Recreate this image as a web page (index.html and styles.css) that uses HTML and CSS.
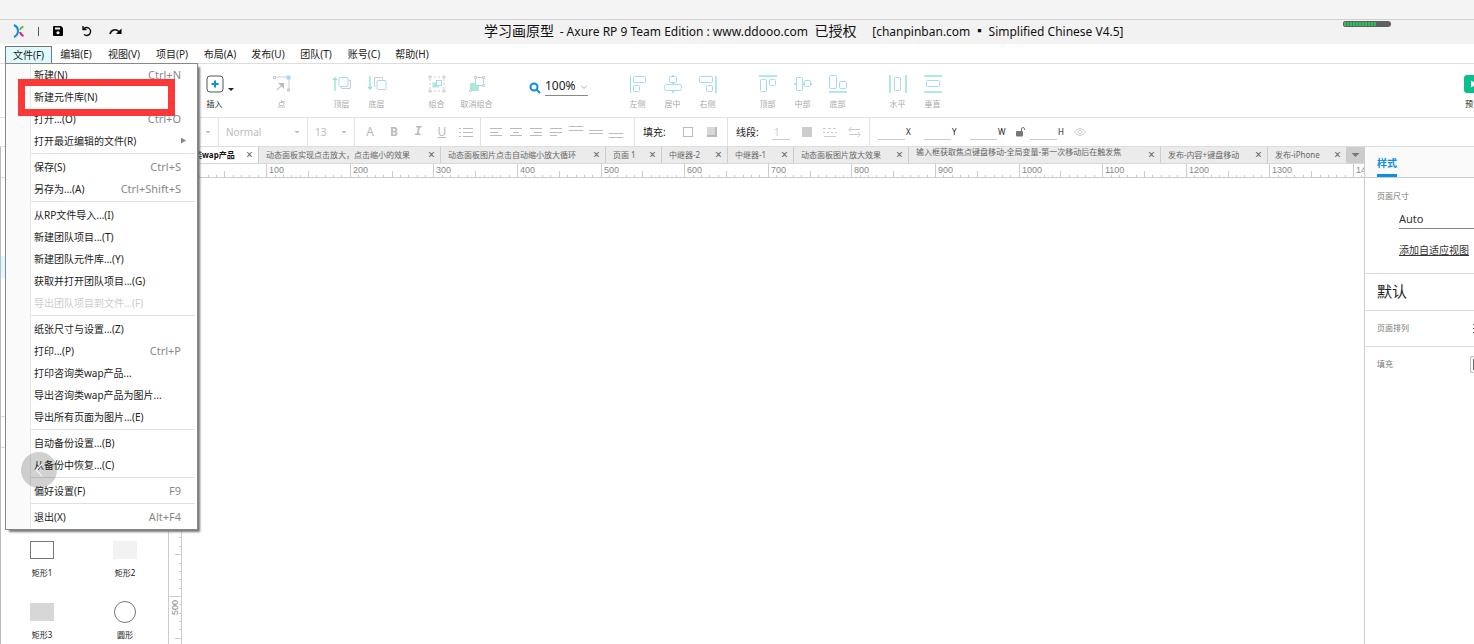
FILE: index.html
```html
<!DOCTYPE html>
<html lang="zh-CN">
<head>
<meta charset="utf-8">
<title>学习画原型 - Axure RP 9</title>
<link rel="stylesheet" href="styles.css">
</head>
<body>
<div class="top-strip"></div>
<header class="titlebar">
  <div class="quick">
    <svg class="logo" width="12" height="14" viewBox="0 0 12 14" fill="none" stroke-width="2"><path d="M1 1C3 2 5 4.500 5 7S3 12 1 13" stroke="#0c8ee2"/><path d="M10.500 2.500C9 3 7.500 4.500 7 6" stroke="#74b943"/><path d="M7 8C7.500 10 9 11.500 10.500 12" stroke="#e5127d"/></svg>
    <span class="quick-sep"></span>
    <button aria-label="保存"><svg width="10" height="10" viewBox="0 0 10 10"><path fill-rule="evenodd" d="M1 0h7l2 2v7a1 1 0 0 1-1 1H1a1 1 0 0 1-1-1V1a1 1 0 0 1 1-1zM2 1.500v2h5v-2zM5 5.200a1.600 1.600 0 1 0 .01 0z"/></svg></button>
    <button aria-label="撤销"><svg width="12" height="12" viewBox="0 0 12 12" fill="none" stroke="#111" stroke-width="1.400"><path d="M2 1v3.500h3.500M2.300 4.200A4 4 0 1 1 3 9.500"/></svg></button>
    <button aria-label="重做"><svg width="13" height="10" viewBox="0 0 13 10"><path d="M1 8C2 3.500 7 2.500 10 5.500" fill="none" stroke="#111" stroke-width="1.600"/><path d="M12.500 2.500v5.500H7z"/></svg></button>
  </div>
  <h1 class="title">学习画原型 <span class="title-app">- Axure RP 9 Team Edition : www.ddooo.com</span> 已授权 <span class="title-tail">[chanpinban.com ▪ Simplified Chinese V4.5]</span></h1>
</header>
<div class="progress"><i></i></div>

<nav class="menubar">
  <button class="open">文件(F)</button><button>编辑(E)</button><button>视图(V)</button><button>项目(P)</button><button>布局(A)</button><button>发布(U)</button><button>团队(T)</button><button>账号(C)</button><button>帮助(H)</button>
</nav>

<div class="ribbon">
  <button class="tool on"><svg width="18" height="18" viewBox="0 0 18 18" fill="none"><rect x="1" y="1" width="16" height="16" rx="3" stroke="#555"/><path d="M9 5.500v7M5.500 9h7" stroke="#0d8ee2" stroke-width="2"/></svg>插入</button>
  <i class="caret dark"></i>
  <button class="tool point"><svg width="18" height="18" viewBox="0 0 18 18" fill="none" stroke="#ccc"><path d="M3 2h11M16 4v10"/><rect x=".5" y="1.500" width="2" height="2"/><rect x="14.500" y="14" width="2" height="2"/><rect x="14" y="1" width="3" height="3" fill="#a8d8f8" stroke="#a8d8f8"/><path d="M4 15l4-4" stroke-width="1.500"/><path d="M11 8v6L5 8z" fill="#bbb" stroke="none"/></svg>点</button>
  <div class="group">
    <button class="tool"><svg width="20" height="18" viewBox="0 0 20 18" fill="none"><path d="M3 16V3M1 5l2-2 2 2" stroke="#95e5d0" stroke-width="1.400"/><path d="M16.500 5.500h2v8h-9v-2" stroke="#ccc"/><rect x="7" y="2.500" width="9" height="9" rx="1" stroke="#a8d8f8"/></svg>顶层</button>
    <button class="tool"><svg width="20" height="18" viewBox="0 0 20 18" fill="none"><path d="M3 1v13M1 12l2 2 2-2" stroke="#95e5d0" stroke-width="1.400"/><path d="M8.500 11.500h-1v-9h8v2" stroke="#ccc"/><rect x="10" y="5.500" width="9" height="9" rx="1" stroke="#a8d8f8"/></svg>底层</button>
  </div>
  <div class="group">
    <button class="tool"><svg width="18" height="18" viewBox="0 0 18 18" fill="none"><rect x="2" y="2" width="14" height="14" stroke="#ccc" stroke-dasharray="2 2"/><path d="M1 1h2v2H1zM15 1h2v2h-2zM1 15h2v2H1zM15 15h2v2h-2z" fill="#fff" stroke="#ccc"/><rect x="4.500" y="7.500" width="6" height="5" fill="#a9ead9"/><rect x="8.500" y="5.500" width="5" height="5" stroke="#a8d8f8" fill="#fff"/></svg>组合</button>
    <button class="tool wide"><svg width="18" height="18" viewBox="0 0 18 18" fill="none"><rect x="2" y="8" width="9" height="8" fill="#a9ead9"/><rect x="7.500" y="2.500" width="8" height="8" stroke="#a8d8f8" fill="#fff"/><path d="M6.500 1.500h2v2h-2zM14.500 1.500h2v2h-2zM14.500 9.500h2v2h-2zM1.500 14.500h2v2h-2z" fill="#fff" stroke="#ccc"/></svg>取消组合</button>
  </div>
  <div class="zoom">
    <svg width="12" height="12" viewBox="0 0 12 12" fill="none" stroke="#0d8ee2" stroke-width="2"><circle cx="5" cy="5" r="3.500"/><path d="M7.500 7.500L11 11"/></svg>
    <label class="zoom-box"><input value="100%" aria-label="缩放"><svg width="6" height="4" viewBox="0 0 6 4" fill="none" stroke="#aaa"><path d="M0 .5l3 3 3-3"/></svg></label>
  </div>
  <div class="group">
    <button class="tool"><svg width="18" height="18" viewBox="0 0 18 18" fill="none" stroke="#a8d8f8"><path d="M1.500 1v17" stroke="#95e5d0"/><rect x="4.500" y="1.500" width="12" height="6" rx="1"/><rect x="4.500" y="10.500" width="6" height="6" rx="1"/></svg>左侧</button>
    <button class="tool"><svg width="18" height="18" viewBox="0 0 18 18" fill="none" stroke="#a8d8f8"><path d="M9 0v2M9 7.500V10M9 15.500V18" stroke="#95e5d0" stroke-width="1.500"/><rect x="5.500" y="1.500" width="7" height="6" rx="1"/><rect x=".5" y="9.500" width="17" height="6" rx="2"/></svg>居中</button>
    <button class="tool"><svg width="18" height="18" viewBox="0 0 18 18" fill="none" stroke="#a8d8f8"><path d="M17 1v17" stroke="#95e5d0" stroke-width="1.500"/><rect x=".5" y="1.500" width="13" height="6" rx="1"/><rect x="7.500" y="10.500" width="6" height="6" rx="1"/></svg>右侧</button>
  </div>
  <div class="group">
    <button class="tool"><svg width="18" height="18" viewBox="0 0 18 18" fill="none" stroke="#a8d8f8"><path d="M0 1h18" stroke="#95e5d0" stroke-width="1.500"/><rect x="1.500" y="4.500" width="6" height="12" rx="1"/><rect x="10.500" y="4.500" width="6" height="6" rx="1"/></svg>顶部</button>
    <button class="tool"><svg width="18" height="18" viewBox="0 0 18 18" fill="none" stroke="#a8d8f8"><path d="M0 9h2.500M8.500 9H11M16.500 9H18" stroke="#95e5d0" stroke-width="1.500"/><rect x="2.500" y="2.500" width="6" height="13" rx="1"/><rect x="10.500" y="5.500" width="6" height="6" rx="1"/></svg>中部</button>
    <button class="tool"><svg width="18" height="18" viewBox="0 0 18 18" fill="none" stroke="#a8d8f8"><path d="M0 17h18" stroke="#95e5d0" stroke-width="1.500"/><rect x=".5" y=".5" width="7" height="13" rx="1"/><rect x="10.500" y="6.500" width="7" height="7" rx="1"/></svg>底部</button>
  </div>
  <div class="group">
    <button class="tool"><svg width="18" height="18" viewBox="0 0 18 18" fill="none" stroke="#a8d8f8"><path d="M1 0v18M17 0v18" stroke="#95e5d0" stroke-width="1.500"/><rect x="5.500" y="2.500" width="6" height="13" rx="1"/></svg>水平</button>
    <button class="tool"><svg width="18" height="18" viewBox="0 0 18 18" fill="none" stroke="#a8d8f8"><path d="M0 1h18M0 17h18" stroke="#95e5d0" stroke-width="1.500"/><rect x="2.500" y="5.500" width="13" height="6" rx="1"/></svg>垂直</button>
  </div>
  <button class="tool on preview"><svg width="18" height="18" viewBox="0 0 18 18"><rect width="18" height="18" rx="3" fill="#09c08d"/><path d="M7 5.500l6 3.500-6 3.500z" fill="#fff"/></svg>预览</button>
</div>

<div class="format">
  <div class="cell first"><i class="caret"></i></div>
  <div class="cell weight">Normal<i class="caret"></i></div>
  <div class="cell size">13<i class="caret"></i></div>
  <div class="cell text-tools">
    <button aria-label="颜色">A</button><button aria-label="粗体"><b>B</b></button><button aria-label="斜体"><i class="italic">I</i></button><button aria-label="下划线"><u>U</u></button>
    <button aria-label="列表"><svg width="14" height="10" viewBox="0 0 14 10" stroke="#bbb"><path d="M0 1.500h2M4 1.500h10M0 5.500h2M4 5.500h10M0 9.500h2M4 9.500h10"/></svg></button>
  </div>
  <div class="cell aligns">
    <button aria-label="左对齐"><svg width="12" height="10" stroke="#bbb"><path d="M0 1.500h12M0 5.500h8M0 8.500h12"/></svg></button>
    <button aria-label="居中对齐"><svg width="12" height="10" stroke="#bbb"><path d="M0 1.500h12M3 5.500h6M0 8.500h12"/></svg></button>
    <button aria-label="右对齐"><svg width="12" height="10" stroke="#bbb"><path d="M0 1.500h12M4 5.500h8M0 8.500h12"/></svg></button>
    <button aria-label="两端对齐"><svg width="12" height="10" stroke="#bbb"><path d="M0 1.500h12M0 5.500h12M0 8.500h7"/></svg></button>
    <button aria-label="顶端"><svg width="14" height="12" stroke="#bbb"><path d="M0 .5h14M0 4.500h14"/></svg></button>
    <button aria-label="中间"><svg width="14" height="12" stroke="#bbb"><path d="M0 4.500h14M0 7.500h14"/></svg></button>
    <button aria-label="底端"><svg width="14" height="12" stroke="#bbb"><path d="M0 7.500h14M0 11.500h14"/></svg></button>
  </div>
  <div class="cell fill"><span>填充:</span><i class="swatch"></i><i class="swatch shadow"></i></div>
  <div class="cell line"><span>线段:</span><input class="line-w" value="1" aria-label="线宽"><i class="swatch solid"></i>
    <svg width="14" height="12" viewBox="0 0 14 12" stroke="#ccc"><path d="M0 2.500h14" stroke-dasharray="3 2"/><path d="M0 6.500h14" stroke-dasharray="2 2"/><path d="M1 10.500h12"/></svg>
    <svg width="13" height="12" viewBox="0 0 13 12" stroke="#ccc" fill="none"><path d="M12 3.500H1M3 1L1 3.500 3 6M1 8.500h11M10 6l2 2.500L10 11"/></svg></div>
  <div class="cell coords">
    <label><input>X</label><label><input>Y</label><label class="w"><input>W</label>
    <svg width="10" height="12" viewBox="0 0 10 12"><rect y="5" width="7" height="5.500" rx="1" fill="#777"/><path d="M5.500 5V3a1.500 1.500 0 0 1 3 0v1" fill="none" stroke="#777"/></svg>
    <label class="h"><input>H</label>
    <svg width="12" height="8" viewBox="0 0 12 8" fill="none" stroke="#ccc"><path d="M.5 4C3-.5 9-.5 11.500 4 9 8.500 3 8.500 .5 4z"/><circle cx="6" cy="4" r="1.800"/></svg>
  </div>
</div>

<main class="workspace">
  <aside class="left">
    <i class="row-line"></i><i class="row-hit"></i><i class="row-line low"></i><i class="row-line lower"></i>
    <div class="shapes">
      <figure><i class="shape outline"></i><figcaption>矩形1</figcaption></figure>
      <figure><i class="shape pale"></i><figcaption>矩形2</figcaption></figure>
      <figure><i class="shape grey"></i><figcaption>矩形3</figcaption></figure>
      <figure><i class="shape circle"></i><figcaption>圆形</figcaption></figure>
    </div>
  </aside>
  <section class="center">
    <div class="tabs">
      <div class="tab active"><span>类wap产品</span><button>×</button></div>
      <div class="tab"><span>动态面板实现点击放大，点击缩小的效果</span><button>×</button></div>
      <div class="tab"><span>动态面板图片点击自动缩小放大循环</span><button>×</button></div>
      <div class="tab"><span>页面 1</span><button>×</button></div>
      <div class="tab"><span>中继器-2</span><button>×</button></div>
      <div class="tab"><span>中继器-1</span><button>×</button></div>
      <div class="tab"><span>动态面板图片放大效果</span><button>×</button></div>
      <div class="tab long"><span>输入框获取焦点键盘移动-全局变量-第一次移动后在触发焦</span><button>×</button></div>
      <div class="tab"><span>发布-内容+键盘移动</span><button>×</button></div>
      <div class="tab"><span>发布-iPhone</span><button>×</button></div>
      <button class="tab-more" aria-label="更多"><i class="caret"></i></button>
    </div>
    <div class="board">
      <svg class="ruler-h" id="ruler-h"></svg>
      <svg class="ruler-v" id="ruler-v"></svg>
      <div class="canvas"></div>
    </div>
  </section>
  <aside class="right">
    <div class="panel-tabs"><button>样式</button></div>
    <div class="panel-size">
      <h2>页面尺寸</h2>
      <input value="Auto" aria-label="页面尺寸">
      <a href="#">添加自适应视图</a>
    </div>
    <div class="panel-row name">默认</div>
    <div class="panel-row">页面排列<svg width="14" height="10" viewBox="0 0 14 10" stroke="#555"><path d="M0 1.500h2M4 1.500h10M0 5.500h2M4 5.500h10M0 9.500h2M4 9.500h10"/></svg></div>
    <div class="panel-row last">填充<i class="fill-box"></i></div>
  </aside>
</main>

<div class="menu">
  <button>新建(N)<kbd>Ctrl+N</kbd></button>
  <button>新建元件库(N)</button>
  <button>打开...(O)<kbd>Ctrl+O</kbd></button>
  <button>打开最近编辑的文件(R)<i class="sub"></i></button>
  <hr>
  <button>保存(S)<kbd>Ctrl+S</kbd></button>
  <button>另存为...(A)<kbd>Ctrl+Shift+S</kbd></button>
  <hr>
  <button>从RP文件导入...(I)</button>
  <button>新建团队项目...(T)</button>
  <button>新建团队元件库...(Y)</button>
  <button>获取并打开团队项目...(G)</button>
  <button disabled>导出团队项目到文件...(F)</button>
  <hr>
  <button>纸张尺寸与设置...(Z)</button>
  <button>打印...(P)<kbd>Ctrl+P</kbd></button>
  <button>打印咨询类wap产品...</button>
  <button>导出咨询类wap产品为图片...</button>
  <button>导出所有页面为图片...(E)</button>
  <hr>
  <button>自动备份设置...(B)</button>
  <button>从备份中恢复...(C)</button>
  <hr>
  <button>偏好设置(F)<kbd>F9</kbd></button>
  <hr>
  <button>退出(X)<kbd>Alt+F4</kbd></button>
</div>
<div class="highlight"></div>
<button class="back" aria-label="返回"><svg width="10" height="14" viewBox="0 0 10 14" fill="none" stroke="#f4f4f4" stroke-width="1.200"><path d="M8 1L2 7l6 6"/></svg></button>
<script src="rulers.js"></script>
</body>
</html>
```
FILE: styles.css
```css
* { box-sizing: border-box; }
body {
  margin: 0; height: 100vh; overflow: hidden; position: relative;
  display: flex; flex-direction: column; background: #fff; color: #222;
  font: 10px/14px "Noto Sans", "Noto Sans CJK SC", sans-serif;
}
button, input { font: inherit; color: inherit; border: 0; padding: 0; background: none; border-radius: 0; }
input { min-width: 0; outline: 0; }
svg { display: block; flex: none; }

.top-strip { flex: none; height: 20px; background: #f4f4f4; border-bottom: 1px solid #d0d0d0; }
.titlebar { flex: none; height: 24px; display: grid; grid-template-columns: 484px 1fr; align-items: center; background: #f2f2f2; padding-bottom: 2px; }
.quick { display: flex; align-items: center; padding-left: 13px; }
.quick button { display: grid; place-items: center; width: 29px; height: 14px; }
.quick-sep { width: 1px; height: 9px; margin: 0 4px 0 13px; background: #555; }
.title { margin: 0; font-size: 14px; line-height: 20px; font-weight: 400; color: #111; white-space: nowrap; }
.title span { font-size: 12px; }
.title .title-app { margin: 0 3px 0 2px; }
.title .title-tail { margin-left: 12px; }
.progress { position: absolute; top: 21px; right: 83px; width: 48px; height: 6px; border-radius: 3px; background: #606060; overflow: hidden; }
.progress i { display: block; width: 33px; height: 6px; border: solid #606060; border-width: 1px 0 1px 1px; background: repeating-linear-gradient(90deg, #3db560 0 2px, #378f50 2px 3px); }

.menubar { flex: none; height: 20px; display: flex; padding: 2px 0 0 5px; border-bottom: 1px solid #ddd; }
.menubar button { width: 48px; height: 16px; text-align: center; white-space: nowrap; }
.menubar .open { position: relative; z-index: 1; width: 47px; height: 17px; background: #dffafc; border: 1px solid #777; border-bottom: 0; }

.ribbon { flex: none; height: 54px; display: flex; padding: 11px 0 0 197px; border-bottom: 1px solid #e2e2e2; overflow: hidden; }
.tool { flex: none; align-self: flex-start; width: 35px; display: flex; flex-direction: column; align-items: center; gap: 4px; font-size: 8px; line-height: 14px; color: #aaa; white-space: nowrap; }
.tool.on { color: #222; }
.tool.wide { width: 45px; }
.tool.point { margin-left: 30px; }
.group { display: flex; margin-left: 25px; }
.caret { flex: none; width: 6px; height: 3px; background: #bbb; clip-path: polygon(0 0, 100% 0, 50% 100%); }
.caret.dark { background: #222; margin: 13px 0 0 -4px; }
.zoom { display: flex; align-items: flex-start; gap: 4px; margin-left: 30px; }
.zoom > svg { margin-top: 7px; }
.zoom-box { display: flex; align-items: center; width: 43px; height: 21px; margin-right: 7px; border-bottom: 1px solid #888; font-size: 12px; }
.zoom-box input { width: 36px; height: 18px; }
.zoom-box svg { margin-top: 4px; }
.preview { width: 18px; margin: 0 -8px 0 auto; }

.format { flex: none; height: 29px; display: flex; border-bottom: 1px solid #ddd; color: #bbb; }
.cell { flex: none; display: flex; align-items: center; border-right: 1px solid #e2e2e2; }
.first { width: 219px; justify-content: flex-end; padding-right: 7px; }
.weight { width: 89px; padding: 0 7px; justify-content: space-between; }
.size { width: 47px; padding: 0 7px; justify-content: space-between; }
.cell button { display: grid; place-items: center; height: 20px; }
.text-tools { width: 126px; padding-left: 3px; font-size: 12px; }
.text-tools button { width: 24px; }
.italic { font-family: "Liberation Mono", monospace; font-weight: 700; }
.aligns { width: 154px; padding-left: 5px; }
.aligns button { width: 20px; }
.fill, .line { color: #222; }
.fill { width: 93px; padding-left: 8px; }
.fill span, .line span { width: 28px; }
.swatch { width: 10px; height: 10px; margin-left: 12px; border: 1px solid #bbb; }
.swatch.shadow { margin-left: 14px; background: #d8d8d8; border: solid #bbb; border-width: 0 2px 2px 0; }
.swatch.solid { background: #ccc; border-color: #ccc; }
.line { width: 142px; padding-left: 8px; }
.line-w { width: 18px; margin-left: 8px; padding-left: 2px; color: #ccc; border-bottom: 1px solid #ccc; }
.line svg { margin-left: 11px; }
.coords { border: 0; padding-left: 8px; font-size: 8px; color: #222; }
.coords label { display: flex; align-items: center; gap: 1px; width: 46px; }
.coords label input { width: 27px; height: 15px; border-bottom: 1px solid #ccc; }
.coords .h { margin-left: 4px; width: 44px; }

.workspace { flex: 1; min-height: 0; display: flex; }
.left { flex: none; width: 168px; display: flex; flex-direction: column; border-left: 1px solid #bbb; }
.row-line { flex: none; height: 31px; border-bottom: 1px solid #ddd; }
.row-hit { flex: none; height: 22px; margin-top: 78px; background: #dffafc; }
.row-line.low { height: 139px; }
.row-line.lower { height: 31px; }
.shapes { display: grid; grid-template-columns: 82px 84px; row-gap: 20px; padding-top: 90px; }
.shapes figure { margin: 0; height: 42px; display: flex; flex-direction: column; align-items: center; justify-content: space-between; }
.shapes figcaption { font-size: 8px; line-height: 14px; color: #222; }
.shape { width: 24px; height: 18px; margin-top: 3px; }
.outline { border: 1px solid #777; }
.pale { background: #f2f2f2; }
.grey { background: #d7d7d7; }
.circle { width: 22px; height: 22px; margin-top: 1px; border: 1px solid #777; border-radius: 50%; }

.center { flex: 1; min-width: 0; display: flex; flex-direction: column; }
.tabs { flex: none; height: 17px; display: flex; background: #ebebeb; border-bottom: 1px solid #d8d8d8; font-size: 8px; color: #666; }
.tab { flex: none; width: 66px; display: flex; align-items: center; justify-content: space-between; padding: 0 4px 0 7px; border-right: 1px solid #ccc; white-space: nowrap; }
.tab button { width: 9px; font-size: 12px; line-height: 12px; color: #666; }
.tab.active { width: 91px; padding-left: 26px; background: #fff; color: #111; font-weight: 700; }
.tab.active button { font-weight: 400; }
.tab:nth-child(2) { width: 182px; }
.tab:nth-child(3) { width: 165px; }
.tab:nth-child(4) { width: 56px; }
.tab:nth-child(7) { width: 115px; }
.tab:nth-child(8) { width: 252px; }
.tab:nth-child(9) { width: 107px; }
.tab:nth-child(10) { width: 79px; }
.long span { padding-bottom: 6px; }
.tab-more { flex: 1; display: grid; place-items: center; background: #ccc; }
.tab-more .caret { width: 8px; height: 4px; background: #777; }
.board { flex: 1; min-height: 0; display: grid; grid-template: 14px 1fr / 14px 1fr; }
.ruler-h { grid-column: 1 / 3; width: 100%; height: 14px; border-bottom: 1px solid #ccc; }
.ruler-v { width: 14px; height: 100%; border: solid #ccc; border-width: 0 1px; }
.tick { stroke: #ccc; fill: none; shape-rendering: crispEdges; }
.mark { font: 9px "Liberation Sans", sans-serif; fill: #888; }

.right { flex: none; width: 110px; border-left: 1px solid #ccc; color: #777; font-size: 8px; overflow: hidden; }
.panel-tabs { height: 31px; padding-left: 12px; background: #fafafa; border-bottom: 1px solid #ccc; }
.panel-tabs button { height: 30px; padding-top: 5px; border-bottom: 3px solid #0d8ee2; color: #0d8ee2; font-size: 10px; font-weight: 700; }
.panel-size { height: 96px; display: flex; flex-direction: column; align-items: flex-start; padding: 11px 0 0 12px; border-bottom: 1px solid #ddd; }
.panel-size h2 { margin: 0; font: inherit; }
.panel-size input { width: 100%; height: 19px; margin: 7px 0 14px 22px; padding-bottom: 2px; border-bottom: 1px solid #888; font-size: 11px; color: #333; }
.panel-size a { margin-left: 22px; font-size: 10px; color: #333; white-space: nowrap; }
.panel-row { display: flex; align-items: center; justify-content: space-between; height: 36px; margin-right: -13px; padding: 0 0 2px 12px; border-bottom: 1px solid #ddd; }
.panel-row.name { height: 37px; font-size: 15px; color: #222; }
.panel-row.last { border: 0; }
.fill-box { width: 17px; height: 17px; border: 1px solid #bbb; border-radius: 2px; background: #fff; box-shadow: inset 0 0 0 2px #fff, inset 0 0 0 3px #666; }

.menu { position: absolute; left: 5px; top: 63px; width: 193px; padding-bottom: 1px; display: flex; flex-direction: column; border: 1px solid #888; background: linear-gradient(90deg, #fafafa 24px, #e8e8e8 24px 25px, #fff 25px); box-shadow: 3px 3px 2px -1px #777; }
.menu button { height: 22px; display: flex; align-items: center; justify-content: space-between; padding: 0 16px 1px 28px; white-space: nowrap; }
.menu button:disabled { color: #ccc; }
.menu kbd { font: inherit; color: #888; font-size: 11px; }
.menu hr { width: 164px; height: 1px; margin: 1px 0 2px 25px; border: 0; background: #e0e0e0; }
.sub { width: 5px; height: 6px; margin-right: -5px; background: #888; clip-path: polygon(0 0, 100% 50%, 0 100%); }
.highlight { position: absolute; left: 18px; top: 79px; width: 157px; height: 37px; border: 7px solid #fb3838; }
.back { position: absolute; left: 21px; top: 452px; width: 36px; height: 36px; display: grid; place-items: center; border-radius: 50%; background: rgba(0, 0, 0, .18); }
```
FILE: rulers.js
```js
const NS = "http://www.w3.org/2000/svg";
const STEP = 83.6;

function drawRuler(svg, origin, first, vertical) {
  const box = svg.getBoundingClientRect();
  const length = vertical ? box.height : box.width;
  let path = "";
  for (let i = 0; ; i++) {
    const pos = Math.round(origin + i * STEP / 10);
    if (pos > length) break;
    const size = i % 10 === 0 ? 14 : i % 5 === 0 ? 7 : 3;
    path += vertical ? `M${13 - size} ${pos}.5h${size}` : `M${pos}.5 ${14 - size}v${size}`;
    if (i % 10 === 0) {
      const text = document.createElementNS(NS, "text");
      text.textContent = first + i * 10;
      text.setAttribute("class", "mark");
      if (vertical) text.setAttribute("transform", `translate(9 ${pos + 19}) rotate(-90)`);
      else { text.setAttribute("x", pos + 3); text.setAttribute("y", 9); }
      svg.appendChild(text);
    }
  }
  const ticks = document.createElementNS(NS, "path");
  ticks.setAttribute("class", "tick");
  ticks.setAttribute("d", path);
  svg.appendChild(ticks);
}

drawRuler(document.getElementById("ruler-h"), 14.6, 0, false);
drawRuler(document.getElementById("ruler-v"), 0, 0, true);
```
